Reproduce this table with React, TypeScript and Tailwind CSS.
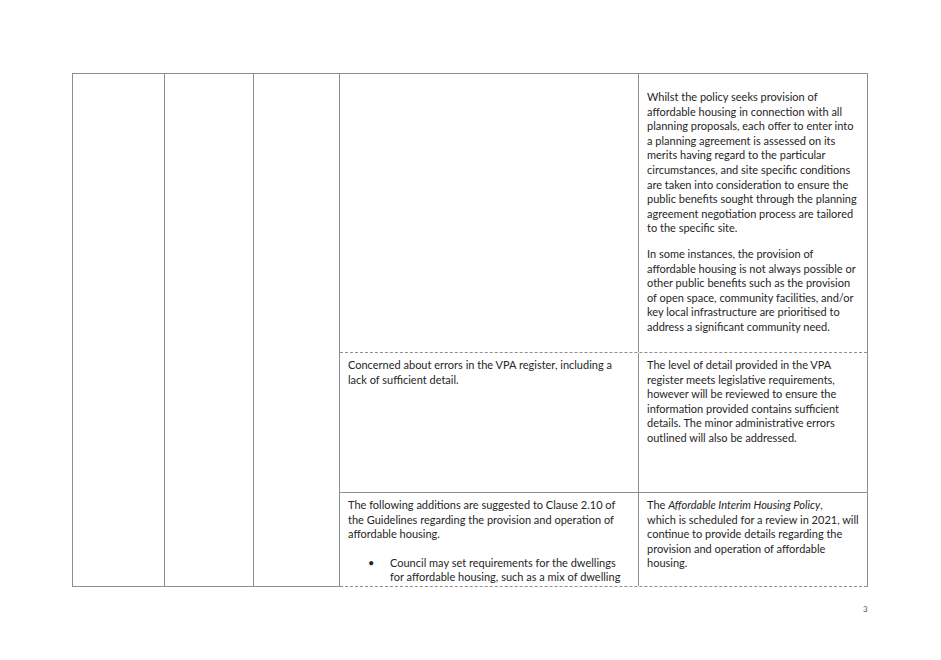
import React from 'react';

const cell = "px-2 text-[11px] leading-[14.6px] text-[#262626]";

export default function App() {
  return (
    <div className="w-[941px] h-[660px] bg-white relative font-['Lato',sans-serif]">
      <div className="pt-[73px] pl-[72px]">
        <div className="flex w-[796px] h-[514px] border-t border-[#8f8f8f]">
          {/* empty leading columns */}
          <div className="w-[92px] border-l border-b border-[#8f8f8f]" />
          <div className="w-[89px] border-l border-b border-[#8f8f8f]" />
          <div className="w-[86px] border-l border-b border-[#8f8f8f]" />

          <div className="flex-1 flex flex-col border-l border-r border-[#8f8f8f]">
            {/* row 1 */}
            <div className="flex h-[279px] border-b border-dashed border-[#8f8f8f]">
              <div className="w-[299px] border-r border-[#8f8f8f]" />
              <div className={`flex-1 pt-[16px] ${cell}`}>
                <p>
                  Whilst the policy seeks provision of affordable housing in connection with all planning
                  proposals, each offer to enter into a planning agreement is assessed on its merits having
                  regard to the particular circumstances, and site specific conditions are taken into
                  consideration to ensure the public benefits sought through the planning agreement
                  negotiation process are tailored to the specific site.
                </p>
                <p className="mt-[11px]">
                  In some instances, the provision of affordable housing is not always possible or other
                  public benefits such as the provision of open space, community facilities, and/or key local
                  infrastructure are prioritised to address a significant community need.
                </p>
              </div>
            </div>

            {/* row 2 */}
            <div className="flex h-[140px] border-b border-[#8f8f8f]">
              <div className={`w-[299px] border-r border-[#8f8f8f] pt-[5px] ${cell}`}>
                Concerned about errors in the VPA register, including a lack of sufficient detail.
              </div>
              <div className={`flex-1 pt-[5px] ${cell}`}>
                The level of detail provided in the VPA register meets legislative requirements, however
                will be reviewed to ensure the information provided contains sufficient details. The minor
                administrative errors outlined will also be addressed.
              </div>
            </div>

            {/* row 3 */}
            <div className="flex flex-1 overflow-hidden border-b border-dashed border-[#8f8f8f]">
              <div className={`w-[299px] border-r border-[#8f8f8f] pt-[5px] ${cell}`}>
                <p>
                  The following additions are suggested to Clause 2.10 of the Guidelines regarding the
                  provision and operation of affordable housing.
                </p>
                <div className="mt-[14px] flex">
                  <span className="w-[42px] shrink-0 pl-[20px]">•</span>
                  <span>
                    Council may set requirements for the dwellings
                    <br />
                    for affordable housing, such as a mix of dwelling
                    <br />
                    types and sizes.
                  </span>
                </div>
              </div>
              <div className={`flex-1 pt-[5px] ${cell}`}>
                The <em>Affordable Interim Housing Policy</em>,
                <br />
                which is scheduled for a review in 2021, will
                <br />
                continue to provide details regarding the
                <br />
                provision and operation of affordable
                <br />
                housing.
              </div>
            </div>
          </div>
        </div>
      </div>
      <div className="absolute left-[863px] top-[603px] text-[8px] text-[#555]">3</div>
    </div>
  );
}
